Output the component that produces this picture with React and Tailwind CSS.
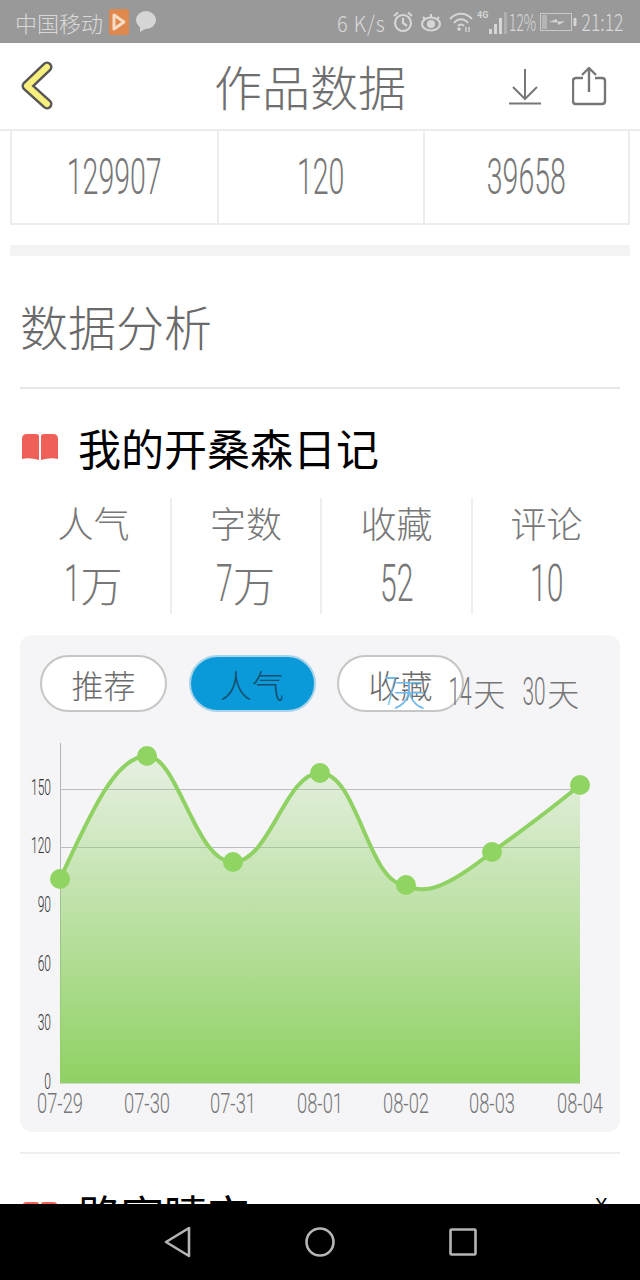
const cjk = 'font-["Noto_Sans_CJK_SC","Noto_Sans",sans-serif]';

const tableCells = ['129907', '120', '39658'];
const stats = [
  { label: '人气', num: '1', unit: '万' },
  { label: '字数', num: '7', unit: '万' },
  { label: '收藏', num: '52', unit: '' },
  { label: '评论', num: '10', unit: '' },
];
const yTicks = [
  { label: '150', y: 789 },
  { label: '120', y: 847 },
  { label: '90', y: 906 },
  { label: '60', y: 965 },
  { label: '30', y: 1024 },
  { label: '0', y: 1083 },
];
const points = [
  { x: 60, y: 879, day: '07-29' },
  { x: 147, y: 756, day: '07-30' },
  { x: 233, y: 862, day: '07-31' },
  { x: 320, y: 773, day: '08-01' },
  { x: 406, y: 885, day: '08-02' },
  { x: 492, y: 852, day: '08-03' },
  { x: 580, y: 785, day: '08-04' },
];
const curve =
  'M60,879 C90,815 115,756 147,756 C178,756 195,862 233,862 C270,862 285,773 320,773 C358,773 368,885 406,885 C422,894 442,892 492,852 C520,832 550,810 580,785';

function Narrow({ children, className = '' }) {
  return <span className={`inline-block origin-center ${className}`}>{children}</span>;
}

function StatusBar() {
  return (
    <div className="flex h-[43px] shrink-0 items-center justify-between bg-[#999999] pl-[15px] pr-[18px] text-[#d9d9d9]">
      <div className="flex items-center">
        <span className="text-[22px] leading-none font-light">中国移动</span>
        <svg width="20" height="26" viewBox="0 0 20 26" className="ml-[6px]">
          <rect width="20" height="26" rx="2" fill="#e0894e" />
          <path d="M5 6 L15 13 L5 20 Z" fill="none" stroke="#f8dcc6" strokeWidth="3" strokeLinejoin="round" />
        </svg>
        <svg width="22" height="24" viewBox="0 0 22 24" className="ml-[6px]">
          <ellipse cx="11" cy="10" rx="10" ry="9" fill="#d6d6d6" />
          <path d="M5 15 L5 22 L12 18 Z" fill="#d6d6d6" />
        </svg>
      </div>
      <div className="flex items-center">
        <span className="w-[55px] text-[22px] leading-none font-light tracking-[1px] whitespace-nowrap">
          <Narrow className="origin-left scale-x-[0.9]">6 K/s</Narrow>
        </span>
        <svg width="22" height="22" viewBox="0 0 22 22" fill="none" stroke="#d6d6d6" strokeWidth="2.2">
          <circle cx="11" cy="12" r="8" />
          <path d="M11 7 V12 L15 15 M2 5 L6 1.5 M20 5 L16 1.5" />
        </svg>
        <svg width="22" height="22" viewBox="0 0 22 22" fill="none" stroke="#d6d6d6" strokeWidth="2.2" className="ml-[6px]">
          <ellipse cx="11" cy="13" rx="9" ry="6.5" />
          <circle cx="11" cy="13" r="3" fill="#d6d6d6" />
          <path d="M3 6 L5 8 M11 3 V6 M19 6 L17 8" />
        </svg>
        <svg width="24" height="22" viewBox="0 0 24 22" fill="none" stroke="#d6d6d6" strokeWidth="2" className="ml-[7px]">
          <path d="M1 8 C7 1 17 1 23 8 M5 12 C9 7 15 7 19 12 M9 15 C10.5 13 13.5 13 15 15" />
          <circle cx="10" cy="18" r="1.8" fill="#d6d6d6" stroke="none" />
          <path d="M17 16 V21 M20 16 V21" strokeWidth="1.4" />
        </svg>
        <svg width="31" height="26" viewBox="0 0 31 26" className="ml-[4px]">
          <text x="0" y="9" fontSize="9" fontWeight="700" fill="#d6d6d6" fontFamily="Roboto, sans-serif">4G</text>
          <rect x="12" y="20" width="3" height="5" fill="#d6d6d6" />
          <rect x="17" y="15" width="3" height="10" fill="#d6d6d6" />
          <rect x="22" y="9" width="3" height="16" fill="#d6d6d6" />
          <rect x="27" y="3" width="3" height="22" fill="#b0b0b0" />
        </svg>
        <span className="flex w-[29px] justify-center text-[23px] leading-none font-light whitespace-nowrap">
          <Narrow className="-mx-[8px] scale-x-[0.6]">12%</Narrow>
        </span>
        <svg width="38" height="18" viewBox="0 0 38 18" className="ml-[3px]">
          <rect x="0.5" y="0.5" width="31" height="17" fill="none" stroke="#c9c9c9" />
          <rect x="2" y="2" width="5" height="14" fill="#b5b5b5" />
          <path d="M9 9 L17 6 L17 8.5 L25 8.5 L18 12 L18 9.5 Z" fill="#d6d6d6" />
          <rect x="33.5" y="5" width="3" height="8" rx="1" fill="#d6d6d6" />
        </svg>
        <span className="ml-[5px] flex w-[39px] justify-center text-[23px] leading-none font-light whitespace-nowrap">
          <Narrow className="-mx-[6px] scale-x-[0.76]">21:12</Narrow>
        </span>
      </div>
    </div>
  );
}

function Header() {
  return (
    <div className="relative flex h-[88px] shrink-0 items-center justify-between border-b-2 border-[#ececec] bg-white pl-[20px] pr-[33px]">
      <svg width="34" height="54" viewBox="20 61 34 54" fill="none" strokeLinecap="round" strokeLinejoin="round">
        <path d="M47 69 L27 88 L47 106" stroke="#565656" strokeWidth="11" />
        <path d="M47 69 L27 88 L47 106" stroke="#f7f07e" strokeWidth="6" />
      </svg>
      <h1 className="absolute left-[214px] top-[12px] text-[48px] leading-[60px] font-light whitespace-nowrap text-[#6f6f6f]">作品数据</h1>
      <div className="flex items-center gap-[30px]">
        <svg width="33" height="38" viewBox="509 66 33 38" fill="none" stroke="#777" strokeWidth="2">
          <path d="M525 68 V97 M513 86 L525 98 L537 86 M509 102.5 H541" />
        </svg>
        <svg width="35" height="40" viewBox="572 66 35 40" fill="none" stroke="#777" strokeWidth="2.4" strokeLinejoin="round">
          <path d="M583 78 H576 Q573 78 573 81 V101 Q573 104 576 104 H602 Q605 104 605 101 V81 Q605 78 602 78 H595" />
          <path d="M589 92 V68 M582 75 L589 68 L596 75" />
        </svg>
      </div>
    </div>
  );
}

function Chart() {
  return (
    <svg width="600" height="420" viewBox="20 712 600 420" className="block">
      <defs>
        <linearGradient id="area" x1="0" y1="0" x2="0" y2="1">
          <stop offset="0" stopColor="#8fd163" stopOpacity="0.14" />
          <stop offset="1" stopColor="#8fd163" />
        </linearGradient>
      </defs>
      <path d="M60.5 743 V1083" stroke="#b5b5b5" strokeWidth="1" />
      {yTicks.slice(0, 2).map((t) => (
        <path key={t.label} d={`M60 ${t.y + 0.5} H580`} stroke="#bcbcc2" strokeWidth="1" />
      ))}
      <path d={`${curve} L580,1083 L60,1083 Z`} fill="url(#area)" />
      <path d="M60 1083 H580" stroke="#9cc682" strokeWidth="1" />
      <path d={curve} fill="none" stroke="#8fd163" strokeWidth="4" />
      {points.map((p) => (
        <circle key={p.day} cx={p.x} cy={p.y} r="10" fill="#90d462" />
      ))}
      {yTicks.map((t) => (
        <text
          key={t.label}
          x={51 - (t.label.length * 20) / 3}
          y={t.y + 6}
          fontSize="22"
          fill="#333"
          fontFamily="Roboto, sans-serif"
          fontWeight="300"
          textLength={(t.label.length * 20) / 3}
          lengthAdjust="spacingAndGlyphs"
        >
          {t.label}
        </text>
      ))}
      {points.map((p) => (
        <text
          key={p.day}
          x={p.x - 23}
          y={1113}
          fontSize="28"
          fill="#777"
          fontFamily="Roboto, sans-serif"
          fontWeight="300"
          textLength="46"
          lengthAdjust="spacingAndGlyphs"
        >
          {p.day}
        </text>
      ))}
    </svg>
  );
}

function Pill({ children, active }) {
  return (
    <div
      className={`flex h-[57px] w-[127px] items-center justify-center rounded-full border-2 text-[32px] leading-none font-light ${
        active ? 'border-[#a8d3e8] bg-[#0a9ada] text-[#17506e]' : 'border-[#c6c6c6] bg-white text-[#6b6b6b]'
      }`}
    >
      {children}
    </div>
  );
}

function Range({ num, className = '', tone = 'text-[#777]' }) {
  return (
    <div className={`absolute top-[35px] flex text-[32px] leading-[44px] font-light whitespace-nowrap ${tone} ${className}`}>
      <Narrow className="-mx-[8px] scale-x-[0.55] text-[38px] font-['Roboto',sans-serif]">{num}</Narrow>
      <span>天</span>
    </div>
  );
}

export default function App() {
  return (
    <div className={`flex h-[1280px] w-[640px] flex-col overflow-hidden bg-white ${cjk}`}>
      <StatusBar />
      <Header />

      <main className="min-h-0 flex-1 overflow-hidden">
        <div className="mx-[10px] grid h-[94px] grid-cols-[205px_206px_1fr] border-2 border-t-0 border-[#ececec]">
          {tableCells.map((value, i) => (
            <div key={value} className={`flex items-center justify-center text-[50px] leading-none font-light text-[#777] ${i > 0 ? 'border-l-2 border-[#ececec]' : ''}`}>
              <Narrow className="scale-x-[0.57] font-['Roboto',sans-serif]">{value}</Narrow>
            </div>
          ))}
        </div>

        <div className="mx-[10px] mt-[20px] h-[11px] bg-[#f3f3f3]" />

        <div className="mx-[20px] h-[133px] border-b-2 border-[#e6e6e6] pt-[39px]">
          <h2 className="text-[48px] leading-[60px] font-light text-[#6a6a6a]">数据分析</h2>
        </div>

        <div className="mx-[20px] mt-[33px] flex h-[50px] items-center">
          <svg width="38" height="28" viewBox="0 0 38 28" className="ml-[1px]">
            <path d="M18 3 Q18 1 15 1 H6 Q1 1 1 6 V26 Q9 24 18 27 Z M20 3 Q20 1 23 1 H32 Q37 1 37 6 V26 Q29 24 20 27 Z" fill="#ef6158" />
          </svg>
          <h3 className="ml-[19px] text-[43px] leading-none font-normal text-black">我的开桑森日记</h3>
        </div>

        <div className="mx-[20px] mt-[26px] grid h-[116px] grid-cols-[150px_150px_151px_149px]">
          {stats.map((s, i) => (
            <div key={s.label} className={`flex flex-col items-center ${i > 0 ? 'border-l-2 border-[#eeeeee]' : 'pr-[3px]'}`}>
              <span className="-mt-[1px] text-[36px] leading-[50px] font-light text-[#777]">{s.label}</span>
              <span className="mt-[7px] flex items-center text-[42px] leading-[60px] font-light text-[#777]">
                <Narrow className="-mx-[7px] scale-x-[0.58] font-['Roboto',sans-serif] text-[52px]">{s.num}</Narrow>
                {s.unit && <span className="ml-[1px]">{s.unit}</span>}
              </span>
            </div>
          ))}
        </div>

        <section className="relative mx-[20px] mt-[21px] h-[497px] rounded-[12px] bg-[#f5f5f7]">
          <div className="flex gap-[21.5px] pl-[20px] pt-[20px]">
            <Pill>推荐</Pill>
            <Pill active>人气</Pill>
            <Pill>收藏</Pill>
          </div>
          <Range num="7" className="left-[368px]" tone="text-[#6fb9ea]" />
          <Range num="14" className="left-[427px]" />
          <Range num="30" className="left-[501px]" />
          <Chart />
        </section>

        <div className="mx-[20px] mt-[20px] border-t-2 border-[#eeeeee]" />

        <div className="relative mx-[20px] mt-[34px] flex items-center">
          <svg width="38" height="28" viewBox="0 0 38 28" className="ml-[1px] mt-[4px]">
            <path d="M18 3 Q18 1 15 1 H6 Q1 1 1 6 V26 Q9 24 18 27 Z M20 3 Q20 1 23 1 H32 Q37 1 37 6 V26 Q29 24 20 27 Z" fill="#ef6158" />
          </svg>
          <h3 className="ml-[19px] text-[43px] leading-[50px] font-normal text-black">路宇晴空</h3>
          <span className="absolute right-[12px] top-[7px] text-[22px] leading-none text-black">ˇ</span>
        </div>
      </main>

      <nav className="flex h-[76px] shrink-0 items-center justify-center gap-[113.5px] bg-black pb-[1px]">
        <svg width="28" height="32" viewBox="0 0 28 32" fill="none" stroke="#b5b5b5" strokeWidth="2.6" strokeLinejoin="round">
          <path d="M25 2 V30 L2 16 Z" />
        </svg>
        <svg width="30" height="32" viewBox="0 0 30 32" fill="none" stroke="#b5b5b5" strokeWidth="2.6">
          <ellipse cx="15" cy="16" rx="13.5" ry="13.5" />
        </svg>
        <svg width="28" height="28" viewBox="0 0 28 28" fill="none" stroke="#b5b5b5" strokeWidth="2.6">
          <rect x="1.5" y="1.5" width="25" height="25" rx="1" />
        </svg>
      </nav>
    </div>
  );
}
